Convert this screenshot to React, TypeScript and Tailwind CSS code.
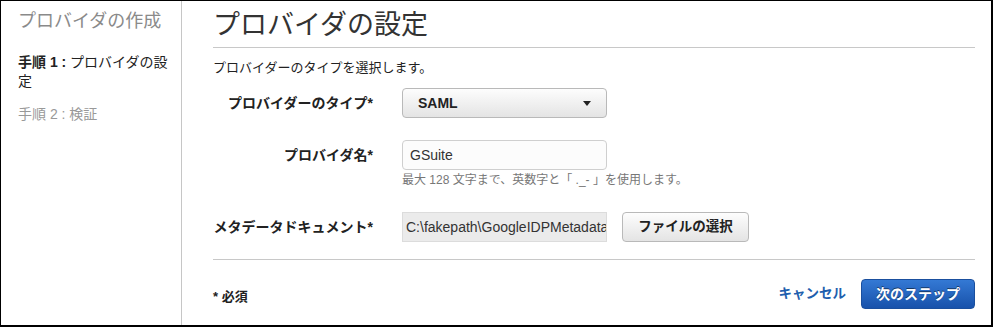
const font = "font-['Liberation_Sans','Noto_Sans_CJK_JP',sans-serif]";

function Caret() {
  return (
    <svg width="8" height="5" viewBox="0 0 8 5" className="shrink-0">
      <path d="M0 0h8L4 5z" fill="#222" />
    </svg>
  );
}

function Label({ children }: { children: React.ReactNode }) {
  return (
    <div className="flex w-[160px] shrink-0 justify-end whitespace-nowrap text-[14px] font-bold leading-[18px] text-[#222]">
      {children}
    </div>
  );
}

export default function App() {
  return (
    <div
      className={`${font} flex h-[327px] w-[993px] border-t border-l border-r-2 border-b-2 border-black bg-white text-[#333]`}
    >
      {/* Sidebar */}
      <aside className="w-[181px] shrink-0 border-r border-[#c6c6c6] pl-[17px] pr-[11px] pt-[10px]">
        <h2 className="text-[18px] leading-[20px] text-[#8a8a8a]">プロバイダの作成</h2>
        <p className="mt-[22px] text-[14px] leading-[19px] text-[#222]">
          <span className="font-bold">手順 1 :</span> プロバイダの設定
        </p>
        <p className="mt-[14px] text-[14px] leading-[19px] text-[#999]">手順 2 : 検証</p>
      </aside>

      {/* Main */}
      <main className="flex flex-1 flex-col pl-[31px] pr-[16px]">
        <div className="border-b border-[#c8c8c8] pt-[9px] pb-[7px]">
          <h1 className="text-[27px] leading-[30px] text-[#333]">プロバイダの設定</h1>
        </div>

        <p className="mt-[11px] text-[13px] leading-[18px] text-[#222]">
          プロバイダーのタイプを選択します。
        </p>

        {/* Provider type */}
        <div className="mt-[11px] flex items-center gap-[29px]">
          <Label>プロバイダーのタイプ*</Label>
          <button className="flex h-[30px] w-[205px] items-center justify-between rounded-[4px] border border-[#b9b9b9] bg-gradient-to-b from-[#fdfdfd] to-[#e4e4e4] pl-[15px] pr-[15px] text-[14px] font-bold text-[#222]">
            SAML
            <Caret />
          </button>
        </div>

        {/* Provider name */}
        <div className="mt-[22px] flex gap-[29px]">
          <div className="flex h-[30px] items-center">
            <Label>プロバイダ名*</Label>
          </div>
          <div>
            <div className="flex h-[30px] w-[205px] items-center rounded-[4px] border border-[#cfcfcf] bg-[#fcfcfc] pl-[7px] text-[14px] text-[#333]">
              GSuite
            </div>
            <p className="mt-[3px] whitespace-nowrap text-[12px] leading-[14px] text-[#777]">
              最大 128 文字まで、英数字と「 ._- 」を使用します。
            </p>
          </div>
        </div>

        {/* Metadata document */}
        <div className="mt-[25px] flex items-center gap-[29px]">
          <Label>メタデータドキュメント*</Label>
          <div className="flex items-center gap-[15px]">
            <div className="flex h-[30px] w-[205px] items-center overflow-hidden whitespace-nowrap border border-[#dcdcdc] bg-[#ebebeb] pl-[3px] text-[14px] text-[#333]">
              C:\fakepath\GoogleIDPMetadata.xml
            </div>
            <button className="flex h-[30px] w-[127px] items-center justify-center rounded-[4px] border border-[#b9b9b9] bg-gradient-to-b from-[#fdfdfd] to-[#e4e4e4] text-[13.5px] font-bold text-[#222]">
              ファイルの選択
            </button>
          </div>
        </div>

        {/* Footer */}
        <div className="mt-[17px] flex items-start justify-between border-t border-[#c8c8c8] pt-[19px]">
          <span className="mt-[10px] text-[13px] font-bold leading-[16px] text-[#222]">* 必須</span>
          <div className="flex items-center gap-[15px]">
            <a className="text-[13.5px] font-bold text-[#1f5fae]">キャンセル</a>
            <button className="flex h-[30px] w-[114px] items-center justify-center rounded-[4px] border border-[#1a4f9e] bg-gradient-to-b from-[#3479d4] to-[#1852ab] text-[14px] font-bold text-white [text-shadow:0_-1px_0_rgba(0,0,0,0.5)]">
              次のステップ
            </button>
          </div>
        </div>
      </main>
    </div>
  );
}
